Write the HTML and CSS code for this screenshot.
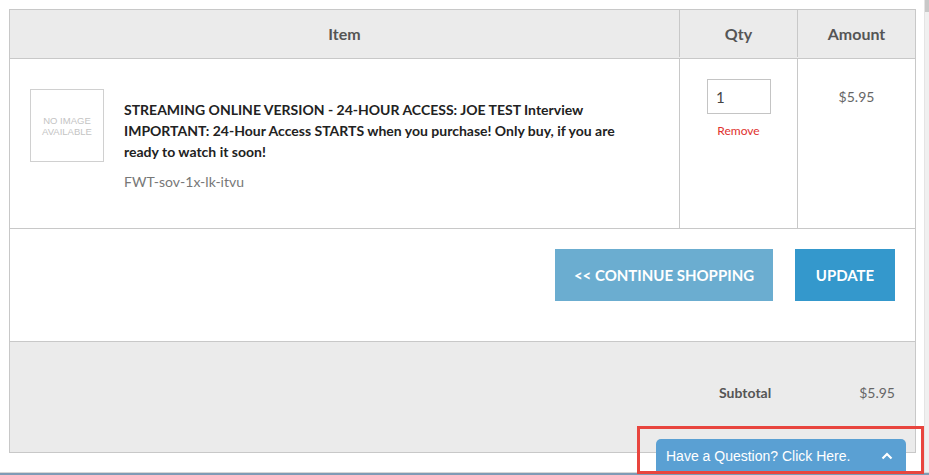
FILE: index.html
```html
<!DOCTYPE html>
<html lang="en">
<head>
    <meta charset="UTF-8">
    <meta name="viewport" content="width=device-width, initial-scale=1.0">
    <title>Shopping Cart</title>
    <link rel="stylesheet" href="styles.css">
</head>
<body>

    <div class="cart">
        <div class="cart-head">
            <div class="cell">Item</div>
            <div class="cell">Qty</div>
            <div class="cell">Amount</div>
        </div>

        <div class="cart-row">
            <div class="cell item">
                <div class="thumb">NO IMAGE<br>AVAILABLE</div>
                <div class="item-info">
                    <p class="item-title">STREAMING ONLINE VERSION - 24-HOUR ACCESS: JOE TEST Interview IMPORTANT: 24-Hour Access STARTS when you purchase! Only buy, if you are ready to watch it soon!</p>
                    <p class="item-sku">FWT-sov-1x-lk-itvu</p>
                </div>
            </div>
            <div class="cell qty">
                <input type="text" class="qty-input" value="1">
                <a href="#" class="remove">Remove</a>
            </div>
            <div class="cell amount">$5.95</div>
        </div>

        <div class="cart-actions">
            <button class="btn btn-light">&lt;&lt; CONTINUE SHOPPING</button>
            <button class="btn">UPDATE</button>
        </div>

        <div class="cart-total">
            <span class="total-label">Subtotal</span>
            <span class="total-value">$5.95</span>
        </div>
    </div>

    <div class="scrollbar"></div>
    <div class="window-edge"></div>

    <div class="chat">
        <span>Have a Question? Click Here.</span>
        <svg width="12" height="8" viewBox="0 0 12 8"><path d="M1.5 6.5 L6 2 L10.5 6.5" fill="none" stroke="#fff" stroke-width="2.2"/></svg>
    </div>
    <div class="highlight"></div>

</body>
</html>
```

FILE: styles.css
```css
body {
    margin: 0;
    padding: 0;
    font-family: Lato, "Open Sans", sans-serif;
    background-color: #fff;
    height: 475px;
    overflow: hidden;
}

.cart {
    margin: 9px 0 0 9px;
    width: 907px;
    border: 1px solid #c8c8c8;
    box-sizing: border-box;
}

.cart-head,
.cart-row {
    display: grid;
    grid-template-columns: 670px 118px 1fr;
    border-bottom: 1px solid #c8c8c8;
}

.cart-head {
    height: 49px;
    box-sizing: border-box;
    padding-bottom: 1px;
    background-color: #ebebeb;
}

.cart-head .cell {
    display: flex;
    align-items: center;
    justify-content: center;
    font-size: 16px;
    font-weight: bold;
    color: #555;
}

.cart-head .cell,
.cart-row .cell {
    border-right: 1px solid #c8c8c8;
}

.cart-head .cell:last-child,
.cart-row .cell:last-child {
    border-right: none;
}

.cart-row {
    height: 170px;
    box-sizing: border-box;
}

.item {
    display: flex;
    padding: 30px 0 0 20px;
}

.thumb {
    width: 74px;
    height: 73px;
    border: 1px solid #d0d0d0;
    box-sizing: border-box;
    flex-shrink: 0;
    display: flex;
    align-items: center;
    justify-content: center;
    text-align: center;
    font-family: Arial, "Liberation Sans", sans-serif;
    font-size: 9.5px;
    line-height: 11px;
    color: #c4c4c4;
}

.item-info {
    margin: 10px 0 0 20px;
    width: 500px;
}

.item-title {
    margin: 0;
    font-size: 14px;
    font-weight: bold;
    line-height: 21px;
    color: #222;
}

.item-sku {
    margin: 9px 0 0;
    font-size: 14px;
    line-height: 21px;
    color: #777;
}

.qty {
    display: flex;
    flex-direction: column;
    align-items: center;
    padding-top: 20px;
}

.qty-input {
    width: 64px;
    height: 35px;
    box-sizing: border-box;
    border: 1px solid #c4c4c4;
    padding: 0 8px;
    font-family: Lato, sans-serif;
    font-size: 15px;
    color: #444;
    margin-left: 1px;
}

.remove {
    margin-top: 10px;
    font-size: 12px;
    line-height: 14px;
    color: #e0322e;
    text-decoration: none;
}

.amount {
    text-align: center;
    padding-top: 28px;
    font-size: 14px;
    line-height: 20px;
    color: #666;
}

.cart-actions {
    display: flex;
    justify-content: flex-end;
    gap: 22px;
    padding: 20px 20px 0 0;
    height: 113px;
    box-sizing: border-box;
    border-bottom: 1px solid #c8c8c8;
}

.btn {
    height: 52px;
    width: 100px;
    padding: 0;
    border: none;
    background-color: #3498cc;
    color: #fff;
    font-family: Lato, sans-serif;
    font-size: 15px;
    font-weight: bold;
    white-space: nowrap;
    cursor: pointer;
}

.btn-light {
    width: 218px;
    background-color: #6badd0;
}

.cart-total {
    display: flex;
    justify-content: flex-end;
    align-items: center;
    height: 110px;
    padding: 0 20px 10px 0;
    box-sizing: border-box;
    background-color: #ebebeb;
    font-size: 14px;
    color: #555;
}

.total-label {
    font-weight: bold;
    margin-right: 88px;
}

.total-value {
    color: #666;
}

.scrollbar {
    position: fixed;
    top: 0;
    right: 0;
    width: 4px;
    height: 100%;
    background-color: #f0f0f0;
    border-left: 1px solid #e4e4e4;
}

.scrollbar::before {
    content: "";
    display: block;
    height: 12px;
    background-color: #c8c8c8;
}

.window-edge {
    position: fixed;
    left: 0;
    right: 0;
    bottom: 0;
    height: 2px;
    border-top: 1px solid #d6d6d6;
    background-color: #7f9bb6;
}

.chat {
    position: fixed;
    left: 656px;
    top: 439px;
    width: 250px;
    height: 33px;
    box-sizing: border-box;
    padding: 0 13px 0 10px;
    display: flex;
    align-items: center;
    justify-content: space-between;
    background-color: #5aa0d3;
    border-radius: 5px 5px 0 0;
    font-family: Arial, "Liberation Sans", sans-serif;
    font-size: 14px;
    color: #fff;
}

.highlight {
    position: fixed;
    left: 637px;
    top: 426px;
    width: 287px;
    height: 48px;
    box-sizing: border-box;
    border: 3px solid #e8453e;
}
```
